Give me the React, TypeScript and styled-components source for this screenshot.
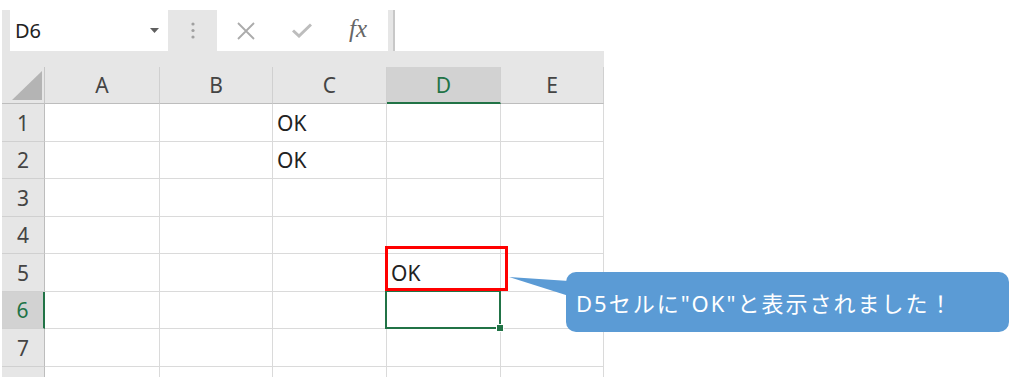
import React from "react";
import styled, {createGlobalStyle} from "styled-components";

const GlobalStyle = createGlobalStyle`
  html, body {
    margin: 0;
    padding: 0;
    background: #ffffff;
  }
  body {
    font-family: "Noto Sans", "Noto Sans CJK JP", sans-serif;
  }
`;

const GREEN = "#217346";

const Page = styled.div`
  position: relative;
  width: 1024px;
  height: 387px;
  padding-top: 10px;
  box-sizing: border-box;
  overflow: hidden;
  background: #fff;
`;

const Sheet = styled.div`
  width: 602px;
  height: 367px;
  margin-left: 2px;
  overflow: hidden;
  background: #e6e6e6;
`;

const FormulaBar = styled.div`
  display: flex;
  height: 41px;
  padding-left: 8px;
`;

const NameBox = styled.div`
  width: 158px;
  background: #fff;
  display: flex;
  align-items: center;
  justify-content: space-between;
  padding: 0 9px 0 5px;
  box-sizing: border-box;
  font-size: 20px;
  color: #222;
`;

const Grip = styled.div`
  width: 49px;
  display: flex;
  justify-content: center;
  align-items: center;
`;

const FuncBox = styled.div`
  width: 171px;
  background: #fff;
  display: flex;
  align-items: center;
  padding-left: 20px;
  box-sizing: border-box;
`;

const IconSlot = styled.span<{ $w: number }>`
  width: ${(p) => p.$w}px;
  display: flex;
  align-items: center;
`;

const Fx = styled.span`
  font-family: "Liberation Serif", "DejaVu Serif", serif;
  font-style: italic;
  font-size: 25px;
  color: #666;
  margin-top: -3px;
`;

const FormulaInput = styled.div`
  flex: 1;
  margin-left: 5px;
  background: #fff;
  border-left: 2px solid #c8c8c8;
`;

const Gap = styled.div`
  height: 16px;
`;

const Grid = styled.div`
  display: grid;
  grid-template-columns: 43px 115px 113px 114px 114px 103px;
  grid-template-rows: 37px 38px 37px 38px 37px 38px 37px 38px 38px;
  background: #fff;
`;

const Corner = styled.div`
  background: #e6e6e6;
  border-right: 1px solid #c6c6c6;
  border-bottom: 1px solid #bdbdbd;
  display: flex;
  align-items: flex-end;
  justify-content: flex-end;
  padding: 0 2px 3px 0;
  box-sizing: border-box;
`;

const ColHead = styled.div<{ $active?: boolean }>`
  background: ${(p) => (p.$active ? "#d2d2d2" : "#e6e6e6")};
  color: ${(p) => (p.$active ? GREEN : "#444")};
  border-right: 1px solid #d0d0d0;
  border-bottom: ${(p) => (p.$active ? `2px solid ${GREEN}` : "1px solid #bdbdbd")};
  box-sizing: border-box;
  display: flex;
  align-items: center;
  justify-content: center;
  font-size: 21px;
  padding-top: ${(p) => (p.$active ? "1px" : "0")};
`;

const RowHead = styled.div<{ $active?: boolean }>`
  background: ${(p) => (p.$active ? "#d2d2d2" : "#e6e6e6")};
  color: ${(p) => (p.$active ? GREEN : "#444")};
  border-right: ${(p) => (p.$active ? `2px solid ${GREEN}` : "1px solid #bdbdbd")};
  border-bottom: 1px solid #d0d0d0;
  box-sizing: border-box;
  display: flex;
  align-items: center;
  justify-content: center;
  font-size: 21px;
`;

const Cell = styled.div<{ $selected?: boolean }>`
  position: relative;
  border-right: 1px solid #dadada;
  border-bottom: 1px solid #dadada;
  box-sizing: border-box;
  display: flex;
  align-items: center;
  padding-left: 4px;
  font-family: "Noto Sans", "Noto Sans CJK JP", sans-serif;
  font-size: 21px;
  color: #222;
  ${(p) =>
    p.$selected &&
    `
    &::after {
      content: "";
      position: absolute;
      left: -2px;
      top: -2px;
      right: -1px;
      bottom: -1px;
      border: 2px solid ${GREEN};
    }
  `}
`;

const FillHandle = styled.span`
  position: absolute;
  right: -4px;
  bottom: -4px;
  width: 6px;
  height: 6px;
  background: ${GREEN};
  border: 1px solid #fff;
  z-index: 2;
`;

const RedFrame = styled.div`
  position: absolute;
  left: 385px;
  top: 246px;
  width: 123px;
  height: 45px;
  border: 3px solid #ff0000;
  box-sizing: border-box;
`;

const Pointer = styled.svg`
  position: absolute;
  left: 505px;
  top: 270px;
`;

const Callout = styled.div`
  position: absolute;
  left: 566px;
  top: 272px;
  width: 443px;
  height: 60px;
  background: #5b9bd5;
  border-radius: 10px;
  display: flex;
  align-items: center;
  padding-left: 10px;
  box-sizing: border-box;
  color: #fff;
  font-family: "Noto Sans", "Noto Sans CJK JP", sans-serif;
  font-size: 22px;
  letter-spacing: 2px;
`;

const columns = ["A", "B", "C", "D", "E"];
const rows = [1, 2, 3, 4, 5, 6, 7, 8];
const data: Record<string, string> = {C1: "OK", C2: "OK", D5: "OK"};

function App() {
  return (
    <Page>
      <GlobalStyle/>
      <Sheet>
        <FormulaBar>
          <NameBox>
            <span>D6</span>
            <svg width="9" height="5" viewBox="0 0 9 5">
              <polygon points="0,0 9,0 4.5,5" fill="#5f5f5f"/>
            </svg>
          </NameBox>
          <Grip>
            <svg width="4" height="17" viewBox="0 0 4 17">
              <circle cx="2" cy="2" r="1.6" fill="#a0a0a0"/>
              <circle cx="2" cy="8.5" r="1.6" fill="#a0a0a0"/>
              <circle cx="2" cy="15" r="1.6" fill="#a0a0a0"/>
            </svg>
          </Grip>
          <FuncBox>
            <IconSlot $w={55}>
              <svg width="18" height="18" viewBox="0 0 18 18">
                <path d="M1 1 L17 17 M17 1 L1 17" stroke="#ababab" strokeWidth="1.8"/>
              </svg>
            </IconSlot>
            <IconSlot $w={57}>
              <svg width="20" height="15" viewBox="0 0 20 15">
                <path d="M1 7.5 L7 13 L19 1.5" stroke="#bdbdbd" strokeWidth="3" fill="none"/>
              </svg>
            </IconSlot>
            <Fx>fx</Fx>
          </FuncBox>
          <FormulaInput/>
        </FormulaBar>
        <Gap/>
        <Grid>
          <Corner>
            <svg width="30" height="29" viewBox="0 0 30 29">
              <polygon points="30,0 30,29 0,29" fill="#b4b4b4"/>
            </svg>
          </Corner>
          {columns.map((c) => (
            <ColHead key={c} $active={c === "D"}>{c}</ColHead>
          ))}
          {rows.map((r) => (
            <React.Fragment key={r}>
              <RowHead $active={r === 6}>{r}</RowHead>
              {columns.map((c) => {
                const selected = c === "D" && r === 6;
                return (
                  <Cell key={c + r} $selected={selected}>
                    {data[c + r]}
                    {selected && <FillHandle/>}
                  </Cell>
                );
              })}
            </React.Fragment>
          ))}
        </Grid>
      </Sheet>
      <RedFrame/>
      <Pointer width="64" height="30" viewBox="0 0 64 30">
        <polygon points="4,7 64,11 64,26" fill="#5b9bd5"/>
      </Pointer>
      <Callout>D5セルに"OK"と表示されました！</Callout>
    </Page>
  );
}

export default App;
